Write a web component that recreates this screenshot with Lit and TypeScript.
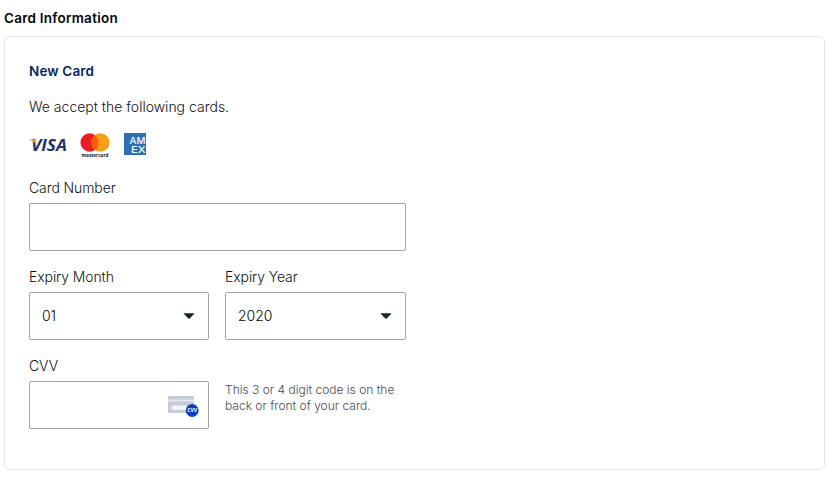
import { LitElement, html, svg, css } from "lit";
import { customElement, property } from "lit/decorators.js";

@customElement("select-box")
class SelectBox extends LitElement {
  @property() value = "";
  static styles = css`
    :host { display: flex; align-items: center; justify-content: space-between; box-sizing: border-box;
      height: 48px; border: 1px solid #a3a3a6; border-radius: 2px; padding: 0 13px 0 12px; background: #fff;
      font-size: 14px; color: #050508; letter-spacing: -0.05px; }
    svg { display: block; }
  `;
  render() {
    return html`<span>${this.value}</span>
      <svg width="12" height="6" viewBox="0 0 12 6"><path d="M1 .2h10q.8 0 .3.6L6.7 5.500q-.7.6-1.400 0L.7.8Q.2.2 1 .2z" fill="#1b262c"/></svg>`;
  }
}

const visa = svg`
  <text class="visa" x="2" y="11.500" textLength="36" lengthAdjust="spacingAndGlyphs">VISA</text>
  <path d="M0 .4h4.600q1.400 0 1.700 1.200l.8 3.600Q4.600 1.900 0 .7z" fill="#e0a44a"/>`;

@customElement("app-root")
class AppRoot extends LitElement {
  static styles = css`
    :host { display: block; box-sizing: border-box; width: 835px; height: 479px; padding: 8px 10px 9px 4px;
      background: #fff; font-family: Inter, "Liberation Sans", sans-serif; font-size: 14px; line-height: 20px;
      font-weight: 300; color: #121215; overflow: hidden; }
    .title, .subtitle { font-weight: 600; font-size: 13.5px; white-space: nowrap; }
    .title { color: #050505; margin-bottom: 8px; letter-spacing: 0.25px; }
    .subtitle { color: #061f66; margin-bottom: 16px; letter-spacing: 0.15px; }
    .card { box-sizing: border-box; height: 434px; border: 1px solid #e4e4e6; border-radius: 6px; padding: 24px; }
    .accept { white-space: nowrap; }
    .logos { display: flex; height: 26px; margin: 15px 0 20px; }
    .logos svg { display: block; overflow: visible; }
    .visa-logo { margin: 7px 13px 0 0; }
    .mc-logo { margin: 1px 14px 0 0; }
    .amex-logo { margin-top: 1px; }
    .visa { font: italic 700 16px "Open Sans", sans-serif; fill: #25306f; }
    .mc { font: 700 5.5px "Open Sans", sans-serif; fill: #17171a; }
    .amex { font: 500 9.5px Inter, sans-serif; fill: #fff; }
    .form { display: grid; grid-template-columns: 180px 181px; column-gap: 16px; row-gap: 16px; }
    .wide { grid-column: span 2; }
    .label { margin-bottom: 5px; white-space: nowrap; letter-spacing: -0.1px; }
    .input { box-sizing: border-box; height: 48px; border: 1px solid #a3a3a6; border-radius: 2px;
      display: flex; align-items: center; justify-content: flex-end; padding-right: 9px; }
    .badge { font: 700 5px "Open Sans", sans-serif; fill: #fff; }
    .hint { padding-top: 26px; font-size: 12px; line-height: 16px; color: #4a4a52; white-space: nowrap; }
  `;
  render() {
    return html`
      <div class="title">Card Information</div>
      <div class="card">
        <div class="subtitle">New Card</div>
        <div class="accept">We accept the following cards.</div>
        <div class="logos">
          <svg class="visa-logo" width="38" height="13" viewBox="0 0 38 13">${visa}</svg>
          <svg class="mc-logo" width="30" height="25" viewBox="0 0 30 25">
            <circle cx="9.600" cy="9.500" r="9.200" fill="#ea1d25"/><circle cx="20.400" cy="9.500" r="9.200" fill="#f79e1b"/>
            <path d="M15 2.050a9.200 9.200 0 0 1 0 14.900a9.200 9.200 0 0 1 0-14.900z" fill="#fb5f09"/>
            <text class="mc" x="1.500" y="23.500" textLength="27" lengthAdjust="spacingAndGlyphs">mastercard</text>
          </svg>
          <svg class="amex-logo" width="22" height="22" viewBox="0 0 22 22">
            <rect width="22" height="22" fill="#2e70b8"/>
            <text class="amex" x="5.500" y="11" textLength="16" lengthAdjust="spacingAndGlyphs">AM</text>
            <text class="amex" x="7" y="19.500" textLength="14.500" lengthAdjust="spacingAndGlyphs">EX</text>
          </svg>
        </div>
        <div class="form">
          <div class="wide"><div class="label">Card Number</div><div class="input"></div></div>
          <div><div class="label">Expiry Month</div><select-box value="01"></select-box></div>
          <div><div class="label">Expiry Year</div><select-box value="2020"></select-box></div>
          <div>
            <div class="label">CVV</div>
            <div class="input">
              <svg width="31" height="24" viewBox="0 0 31 24">
                <rect y="3" width="26" height="17" rx="1" fill="#c3ccd7"/>
                <path d="M0 7.500h26" stroke="#e3e8ee" stroke-width="2"/>
                <rect x="3.500" y="12.500" width="15" height="4.500" fill="#f3f5f8"/>
                <circle cx="24.200" cy="17.500" r="6.400" fill="#0d3fba"/>
                <text class="badge" x="19.200" y="19.300" textLength="10" lengthAdjust="spacingAndGlyphs">CVV</text>
              </svg>
            </div>
          </div>
          <div class="hint">This 3 or 4 digit code is on the<br>back or front of your card.</div>
        </div>
      </div>`;
  }
}
